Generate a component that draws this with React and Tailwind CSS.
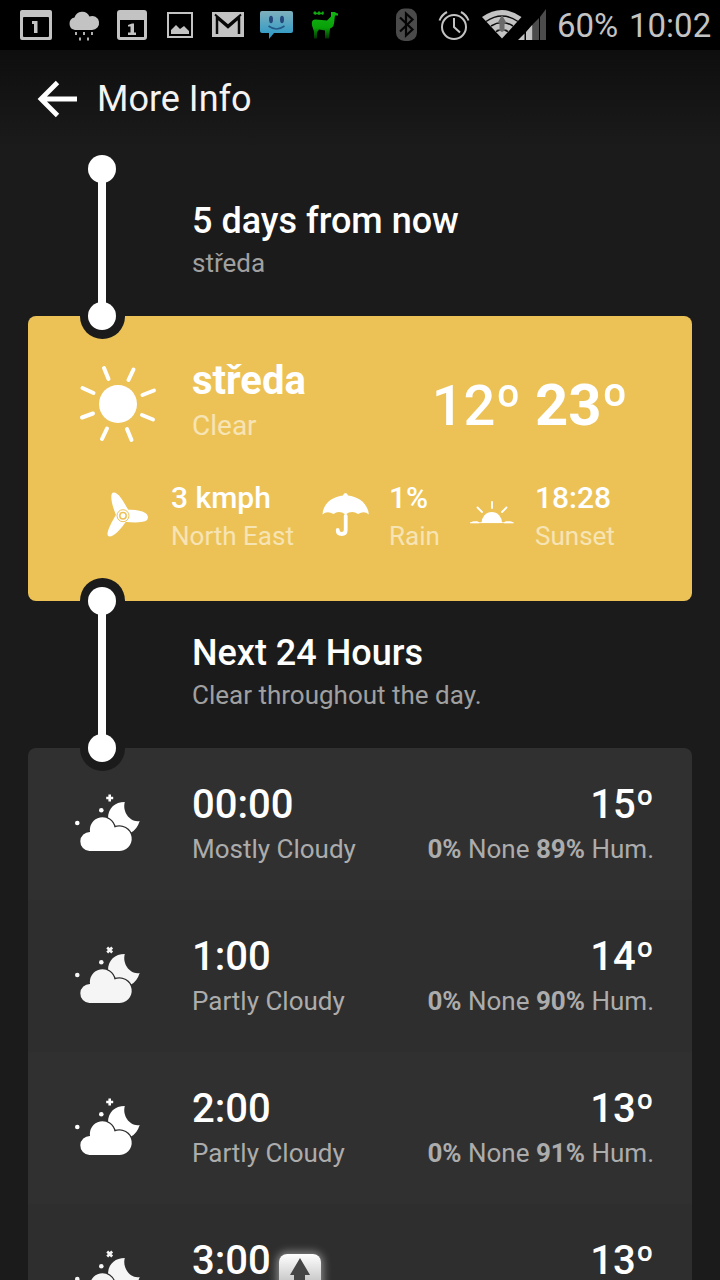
import React from 'react';

const hours = [
  { time: '00:00', summary: 'Mostly Cloudy', temp: '15º', hum: '89%', tone: 'bg-[#303030]', icon: 'text-white' },
  { time: '1:00', summary: 'Partly Cloudy', temp: '14º', hum: '90%', tone: 'bg-[#2e2e2e]', icon: 'text-[#f5f5f5]' },
  { time: '2:00', summary: 'Partly Cloudy', temp: '13º', hum: '91%', tone: 'bg-[#303030]', icon: 'text-white' },
  { time: '3:00', summary: 'Partly Cloudy', temp: '13º', hum: '91%', tone: 'bg-[#2e2e2e]', icon: 'text-[#f5f5f5]' },
];

function StatusIcons() {
  return (
    <svg className="block shrink-0" width="550" height="50" viewBox="0 0 550 50" fill="#c3c3c3">
      <defs>
        <linearGradient id="smile" x1="0" y1="0" x2="0" y2="1">
          <stop offset="0" stopColor="#7fb0bd" />
          <stop offset="1" stopColor="#2498c8" />
        </linearGradient>
        <linearGradient id="llama" x1="0" y1="0" x2="0" y2="1">
          <stop offset="0" stopColor="#14b414" />
          <stop offset="0.6" stopColor="#08a008" />
          <stop offset="1" stopColor="#033003" />
        </linearGradient>
      </defs>
      {/* calendar */}
      <path fillRule="evenodd" d="M22 10h28a2 2 0 0 1 2 2v26a2 2 0 0 1-2 2H22a2 2 0 0 1-2-2V12a2 2 0 0 1 2-2zm2 7q-1 0-1 1v18q0 1 1 1h24q1 0 1-1V18q0-1-1-1z" />
      <path d="M32 21h5.500v12H34v-9h-2z" />
      {/* rain */}
      <path d="M75 30a6.300 6.300 0 0 1-.5-12.400A8 8 0 0 1 89.500 16.500 7 7 0 1 1 92 30z" />
      <path d="M76 32v3M84 32v3M92 32v3M80 37.500v3M88 37.500v3" stroke="#c3c3c3" strokeWidth="1.800" />
      {/* day planner */}
      <path fillRule="evenodd" d="M120 10h24a3 3 0 0 1 3 3v24a3 3 0 0 1-3 3h-24a3 3 0 0 1-3-3V13a3 3 0 0 1 3-3zm0 10v17h24V20z" />
      <path d="M128 25l4-1.500h2v9h2V35h-8v-2.500h2.500v-6H128z" />
      {/* picture */}
      <path fillRule="evenodd" d="M167 12h26v26h-26zm2 2v22h22V14z" />
      <path d="M171 34v-4l5-5 4 4 4-3 5 5v3z" />
      {/* gmail */}
      <path d="M212 12h32v25h-32z" />
      <path d="M217 34V17.500l11 9.500 11-9.500V34" fill="none" stroke="#080808" strokeWidth="2.500" />
      <path d="M215 14.500l13 11 13-11" fill="none" stroke="#080808" strokeWidth="2" />
      {/* sms face */}
      <path fill="url(#smile)" d="M262 11h29q2 0 2 2v18q0 2-2 2h-17l-5 6v-6h-7q-2 0-2-2V13q0-2 2-2z" />
      <ellipse cx="271" cy="19.500" rx="2" ry="3.700" fill="#24477c" />
      <ellipse cx="282" cy="19.500" rx="2" ry="3.700" fill="#24477c" />
      <path d="M268.500 26q8 6 16 0" fill="none" stroke="#245a8a" strokeWidth="1.600" />
      {/* llama */}
      <path fill="url(#llama)" d="M331 12h4l1 1 2 .5v2h-3l-1 8q-.5 4-4 5l-1 10h-4v-8l-6-1-2 3v6h-3v-7l-2-6q-1-7 4-6l11 1 4-4z" />
      <path fill="#12a812" d="M313 13l2-2 2 2 2-2 2 2 2-2 1 2-1 2-2-1-2 1-2-1-2 1z" />
      {/* bluetooth */}
      <rect x="396" y="8.500" width="21" height="32.500" rx="8.500" fill="#4a4a4a" />
      <path d="M400 17.500l12.500 12-6.500 6v-22l6.500 6-12.500 12" fill="none" stroke="#050505" strokeWidth="2.200" />
      {/* alarm */}
      <g fill="none" stroke="#c3c3c3" strokeWidth="2">
        <circle cx="454" cy="27" r="12" />
        <path d="M454 18v9l6 5.500" />
        <path d="M439.500 20.500q2-5.500 7.500-8.500M461 12q5.500 3 7.500 8.500" />
      </g>
      {/* wifi */}
      <path d="M482 17q20-14 39.500 0L502 38.500z" />
      <g fill="none" stroke="#0c0c0c" strokeWidth="1.500">
        <path d="M486 21.500q16-11 32 0M491 26q11-7 22 0M496 31.500q6-3.500 12 0" />
      </g>
      <path fill="#6b6b6b" d="M502 15l4.500 8h-2v6h3l-5.500 3-5.500-3h3v-6h-2z" />
      {/* signal */}
      <path d="M518 40l6.500-6.500V40zM526 32l6.500-7.500V40H526z" />
      <path fill="#4c4c4c" d="M533 24l6-6v22h-6zM540 17l6-8v31h-6z" />
    </svg>
  );
}

function Rail({ className }) {
  return (
    <div className={`absolute left-[80px] z-10 w-11 ${className}`}>
      <div className="absolute inset-y-0 left-[18px] w-2 bg-white" />
      <div className="absolute -top-[14px] left-2 size-7 rounded-full bg-white" />
      <div className="absolute -bottom-[14px] left-2 size-7 rounded-full bg-white" />
    </div>
  );
}

function Heading({ title, sub, className, children }) {
  return (
    <div className={`relative flex shrink-0 flex-col justify-end pb-8 pl-[192px] ${className}`}>
      {children}
      <div className="text-[36px] leading-[41px] font-medium">{title}</div>
      <div className="text-[26px] leading-[42px] text-[#a0a0a0]">{sub}</div>
    </div>
  );
}

function Sun() {
  return (
    <svg className="block" width="80" height="80" viewBox="78 364 80 80">
      <circle cx="118" cy="404" r="19" fill="#fff" />
      <path
        d="M104 368l4.500 11M133.500 369.500l-5 10.500M154 390.500l-11.500 4.500M153 419.500l-11-4.500M131.500 440l-4.500-11M102 439l5-10.500M82 417.500l11-4M82.500 388l11 5"
        stroke="#fff"
        strokeWidth="4"
        strokeLinecap="round"
      />
    </svg>
  );
}

function Fan() {
  return (
    <svg className="block" width="44" height="48" viewBox="105 490 44 48">
      <g fill="#fff">
        <path id="blade" d="M123 509.500Q148 509 148 517.500Q148 524.500 123 521.500z" />
        <path d="M117.500 518C111 505 109.500 492.500 113.500 492.500C119 492.500 123 501 129 511z" />
        <path d="M117.500 512C108 528 105 536 109.500 536.500C114 536.500 121 529 127 520z" />
      </g>
      <circle cx="123" cy="515.700" r="6" fill="#fff" stroke="#ecc257" strokeWidth="1" />
      <circle cx="123" cy="515.700" r="3.200" fill="none" stroke="#ecc257" strokeWidth="1.500" />
    </svg>
  );
}

function Umbrella() {
  return (
    <svg className="block" width="48" height="46" viewBox="322 492 48 46">
      <path
        fill="#fff"
        d="M322.500 514.500C323 503 333 496.500 343 495.500Q343.500 493 345.500 493Q347.500 493 348 495.500C358 496.500 368 503 368.800 514.500Q364.500 510.500 358 514Q352 510 345.500 514.500Q339 510 333.500 514Q327 510.500 322.500 514.500z"
      />
      <path d="M345.700 516v14q0 4-4 4t-4-4" fill="none" stroke="#fff" strokeWidth="3.800" strokeLinecap="round" />
    </svg>
  );
}

function Sunset() {
  return (
    <svg className="block" width="46" height="26" viewBox="469 499 46 26">
      <path fill="#fff" d="M481.500 523a10.300 11 0 0 1 20.600 0z" />
      <path d="M470 523.200q2-2 4-2h3.500q1.500 1 2 2zM504 523.200q.5-2 2-2h4q2 0 4 2z" fill="#fff" />
      <path d="M470 522.600h43.500" stroke="#fff" strokeWidth=".8" />
      <path d="M492 502v6M477.500 507.500l4.500 4.500M506.500 507.500l-4.500 4.500" stroke="#fff" strokeWidth="1.800" strokeLinecap="round" />
    </svg>
  );
}

function CloudMoon({ className, moon, x }) {
  return (
    <svg className={`block ${className}`} width="68" height="60" viewBox="74 793 68 60" fill="currentColor">
      <path d="M124.800 802C122 812 130.500 823 139.700 821Q137 829.500 131 832.500Q127 827 115.500 826Q112 820 108 818.500C108 808 115 802 124.800 802z" />
      <path
        className={moon}
        strokeWidth="2.500"
        paintOrder="stroke"
        d="M89.500 851a9.500 9.500 0 0 1 .6-19A12 12 0 0 1 114.500 827.500A12.300 12.300 0 1 1 118 851z"
      />
      <circle cx="77.300" cy="823" r="2.300" />
      <circle cx="101.300" cy="810.200" r="2.300" />
      <path d="M109.700 794.500v7M106.200 798h7" stroke="currentColor" strokeWidth="2.600" transform={x ? 'rotate(45 109.700 798)' : undefined} />
    </svg>
  );
}

function Stat({ value, label, className }) {
  return (
    <div className={className}>
      <div className="text-[30px] leading-[38px] font-medium">{value}</div>
      <div className="text-[26px] leading-[38px] text-[#f7e4b5]">{label}</div>
    </div>
  );
}

function HourRow({ hour, odd }) {
  return (
    <div className={`flex h-[152px] shrink-0 pl-[46px] pr-[38px] ${hour.tone}`}>
      <div className="w-[118px] pt-[45px]">
        <CloudMoon className={hour.icon} moon={odd ? 'stroke-[#2e2e2e]' : 'stroke-[#303030]'} x={odd} />
      </div>
      <div className="flex-1 pt-[35px]">
        <div className="text-[40px] leading-[44px] font-medium">{hour.time}</div>
        <div className="text-[26px] leading-[44px] text-[#acacac]">{hour.summary}</div>
      </div>
      <div className="pt-[35px] text-right">
        <div className="text-[40px] leading-[44px] font-medium">{hour.temp}</div>
        <div className="text-[26px] leading-[44px] text-[#acacac]">
          <b className="font-bold">0%</b> None <b className="font-bold">{hour.hum}</b> Hum.
        </div>
      </div>
    </div>
  );
}

export default function App() {
  return (
    <div className="relative flex h-[1280px] w-[720px] flex-col overflow-hidden bg-[#1b1b1b] font-['Roboto',sans-serif] whitespace-nowrap text-white">
      <div className="flex h-[50px] shrink-0 bg-black text-[33px] leading-[52px] text-[#c3c3c3]">
        <StatusIcons />
        <div className="ml-[7px] w-[72px]">60%</div>
        <div>10:02</div>
      </div>

      <div className="flex h-[98px] shrink-0 items-center bg-linear-to-b from-[#0e0e0e] to-[#1b1b1b] pl-[37px] text-[36px] text-[#f3f3f3]">
        <svg className="block" width="42" height="38" viewBox="0 0 42 38" fill="none" stroke="#fff" strokeWidth="4.800">
          <path d="M20.500 2.500L4 19l16.500 16.500M4 19h36" />
        </svg>
        <div className="ml-[18px] leading-[40px]">More Info</div>
      </div>

      <Heading title="5 days from now" sub="středa" className="h-[168px]">
        <Rail className="top-[21px] bottom-0" />
      </Heading>

      <div className="relative mx-7 h-[285px] shrink-0 overflow-hidden rounded-lg bg-[#ecc257]">
        <div className="absolute -top-[22px] left-[52px] size-[45px] rounded-full bg-[#1b1b1b]" />
        <div className="absolute -bottom-[22px] left-[52px] size-[45px] rounded-full bg-[#1b1b1b]" />
        <div className="flex h-[163px] pl-[50px] pr-[64px]">
          <div className="w-[114px] pt-12">
            <Sun />
          </div>
          <div className="flex-1 pt-[42px]">
            <div className="text-[40px] leading-[46px] font-bold">středa</div>
            <div className="text-[28px] leading-[44px] text-[#f7e4b5]">Clear</div>
          </div>
          <div className="pt-[59px] text-[56px] leading-[60px] font-medium">
            12º <b className="text-[58px] font-bold">23º</b>
          </div>
        </div>
        <div className="flex pl-[77px]">
          <div className="w-[66px] pt-[11px]">
            <Fan />
          </div>
          <Stat className="w-[151px]" value="3 kmph" label="North East" />
          <div className="w-[67px] pt-[13px]">
            <Umbrella />
          </div>
          <Stat className="w-[80px]" value="1%" label="Rain" />
          <div className="w-[66px] pt-5">
            <Sunset />
          </div>
          <Stat value="18:28" label="Sunset" />
        </div>
      </div>

      <Heading title="Next 24 Hours" sub="Clear throughout the day." className="h-[147px]">
        <Rail className="inset-y-0" />
      </Heading>

      <div className="relative mx-7 shrink-0 overflow-hidden rounded-t-lg">
        <div className="absolute -top-[22px] left-[52px] size-[45px] rounded-full bg-[#1b1b1b]" />
        {hours.map((hour, i) => (
          <HourRow key={hour.time} hour={hour} odd={i % 2 === 1} />
        ))}
      </div>

      {/* scroll button peeking in from the bottom edge */}
      <div className="absolute top-[1254px] left-[279px] h-10 w-[42px] rounded-lg bg-linear-to-b from-white to-[#b0b0b0] shadow-[0_0_9px_2px_rgba(255,255,255,0.45)]">
        <svg className="block" width="42" height="40" viewBox="0 0 42 40" fill="#454545">
          <path d="M21 4l10 17h-5v19H15V21h-4z" />
        </svg>
      </div>
    </div>
  );
}
